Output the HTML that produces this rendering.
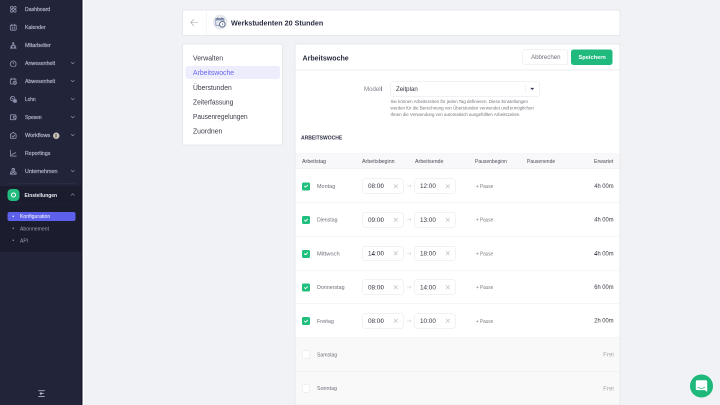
<!DOCTYPE html>
<html><head><meta charset="utf-8">
<style>
*{box-sizing:border-box;margin:0;padding:0}
html,body{width:720px;height:405px;overflow:hidden;background:#f1f2f6}
body{font-family:"Liberation Sans",sans-serif}
#root{will-change:transform;position:absolute;left:0;top:0;width:1440px;height:810px;transform:scale(0.5);transform-origin:0 0;background:#f1f2f6;overflow:hidden}
.a{position:absolute}
.t{position:absolute;white-space:nowrap}
.card{position:absolute;background:#fff;border:2px solid #e7e8ec;border-radius:4px}
.ol{position:absolute;border:2px solid #e7e8ec;border-radius:4px}
#sb{position:absolute;left:0;top:0;width:162px;height:810px;background:#222539;overflow:hidden}
</style></head><body>
<div id="root">
<div id="sb">
<svg class="a" style="left:19px;top:10.5px" width="15" height="15" viewBox="0 0 15 15" fill="none" stroke="#8f92ad" stroke-width="1.7" stroke-linejoin="round" stroke-linecap="round"><rect x="1.8" y="1.8" width="5" height="5" rx="2.3"/><rect x="8.2" y="1.8" width="5" height="5" rx="2.3"/><rect x="1.8" y="8.2" width="5" height="5" rx="2.3"/><rect x="8.2" y="8.2" width="5" height="5" rx="2.3"/></svg>
<div class="t" style="left:49.60px;top:11.57px;font-size:10.6px;line-height:12.72px;color:#aeb0c5;transform:scaleX(0.97);transform-origin:left center;-webkit-text-stroke:0.4px #aeb0c5;">Dashboard</div>
<svg class="a" style="left:19px;top:46.5px" width="15" height="15" viewBox="0 0 15 15" fill="none" stroke="#8f92ad" stroke-width="1.7" stroke-linejoin="round" stroke-linecap="round"><rect x="1.6" y="3.4" width="11.8" height="10" rx="1.6"/><path d="M4.6 1.4v3.4M10.4 1.4v3.4M5.6 7v4M9.4 7v4"/></svg>
<div class="t" style="left:49.60px;top:47.57px;font-size:10.6px;line-height:12.72px;color:#aeb0c5;transform:scaleX(0.97);transform-origin:left center;-webkit-text-stroke:0.4px #aeb0c5;">Kalender</div>
<svg class="a" style="left:19px;top:82.5px" width="15" height="15" viewBox="0 0 15 15" fill="none" stroke="#8f92ad" stroke-width="1.7" stroke-linejoin="round" stroke-linecap="round"><g fill="#8f92ad" stroke="none"><circle cx="7.5" cy="3.4" r="2.1"/><path d="M4.5 8.6a3 3 0 0 1 6 0z"/><circle cx="4.1" cy="9.2" r="1.8"/><path d="M1 14.2a3.1 3.1 0 0 1 6.2 0z"/><circle cx="10.9" cy="9.2" r="1.8"/><path d="M7.8 14.2a3.1 3.1 0 0 1 6.2 0z"/></g></svg>
<div class="t" style="left:49.60px;top:83.57px;font-size:10.6px;line-height:12.72px;color:#aeb0c5;transform:scaleX(1.03);transform-origin:left center;-webkit-text-stroke:0.4px #aeb0c5;">Mitarbeiter</div>
<svg class="a" style="left:19px;top:118.5px" width="15" height="15" viewBox="0 0 15 15" fill="none" stroke="#8f92ad" stroke-width="1.7" stroke-linejoin="round" stroke-linecap="round"><path d="M7.5 2.6l1.4 1 1.7-.2.7 1.6 1.5.9-.2 1.7 1 1.4-1 1.4.2 1.7-1.5.9-.7 1.6-1.7-.2-1.4 1-1.4-1-1.7.2-.7-1.6-1.5-.9.2-1.7-1-1.4 1-1.4-.2-1.7 1.5-.9.7-1.6 1.7.2z" stroke-width="1.5"/><path d="M7.5 6v2.6"/></svg>
<div class="t" style="left:49.60px;top:119.57px;font-size:10.6px;line-height:12.72px;color:#aeb0c5;transform:scaleX(0.99);transform-origin:left center;-webkit-text-stroke:0.4px #aeb0c5;">Anwesenheit</div>
<svg class="a" style="left:141px;top:122.5px" width="9" height="6" viewBox="0 0 9 6" fill="none" stroke="#8c8fa9" stroke-width="1.3" stroke-linecap="round"><path d="M1.2 1.4l3.3 3.1 3.3-3.1"/></svg>
<svg class="a" style="left:19px;top:154.5px" width="15" height="15" viewBox="0 0 15 15" fill="none" stroke="#8f92ad" stroke-width="1.7" stroke-linejoin="round" stroke-linecap="round"><path d="M6 13H3a1.3 1.3 0 0 1-1.3-1.3V4.3A1.3 1.3 0 0 1 3 3h8.6a1.3 1.3 0 0 1 1.3 1.3V6M4.6 1.2v3.2M9.6 1.2v3.2"/><circle cx="10.6" cy="10.6" r="3.3"/><path d="M10.6 9.1v1.6l1.1.8"/></svg>
<div class="t" style="left:49.60px;top:155.57px;font-size:10.6px;line-height:12.72px;color:#aeb0c5;transform:scaleX(0.99);transform-origin:left center;-webkit-text-stroke:0.4px #aeb0c5;">Abwesenheit</div>
<svg class="a" style="left:141px;top:158.5px" width="9" height="6" viewBox="0 0 9 6" fill="none" stroke="#8c8fa9" stroke-width="1.3" stroke-linecap="round"><path d="M1.2 1.4l3.3 3.1 3.3-3.1"/></svg>
<svg class="a" style="left:19px;top:190.5px" width="15" height="15" viewBox="0 0 15 15" fill="none" stroke="#8f92ad" stroke-width="1.7" stroke-linejoin="round" stroke-linecap="round"><circle cx="6.2" cy="6.2" r="4.5"/><path d="M4.5 4.5l3.4 3.4"/><rect x="8.4" y="8.6" width="5.4" height="5" rx="0.8" fill="#8f92ad"/></svg>
<div class="t" style="left:49.60px;top:191.57px;font-size:10.6px;line-height:12.72px;color:#aeb0c5;transform:scaleX(0.9);transform-origin:left center;-webkit-text-stroke:0.4px #aeb0c5;">Lohn</div>
<svg class="a" style="left:141px;top:194.5px" width="9" height="6" viewBox="0 0 9 6" fill="none" stroke="#8c8fa9" stroke-width="1.3" stroke-linecap="round"><path d="M1.2 1.4l3.3 3.1 3.3-3.1"/></svg>
<svg class="a" style="left:19px;top:226.5px" width="15" height="15" viewBox="0 0 15 15" fill="none" stroke="#8f92ad" stroke-width="1.7" stroke-linejoin="round" stroke-linecap="round"><path d="M12.6 5V3.6a1 1 0 0 0-1-1H2.8a1 1 0 0 0-1 1v7.8a1 1 0 0 0 1 1h8.8a1 1 0 0 0 1-1V10"/><path d="M13.4 5.6H9.2a1.9 1.9 0 0 0 0 3.8h4.2z"/></svg>
<div class="t" style="left:49.60px;top:227.57px;font-size:10.6px;line-height:12.72px;color:#aeb0c5;transform:scaleX(0.92);transform-origin:left center;-webkit-text-stroke:0.4px #aeb0c5;">Spesen</div>
<svg class="a" style="left:141px;top:230.5px" width="9" height="6" viewBox="0 0 9 6" fill="none" stroke="#8c8fa9" stroke-width="1.3" stroke-linecap="round"><path d="M1.2 1.4l3.3 3.1 3.3-3.1"/></svg>
<svg class="a" style="left:19px;top:262.5px" width="15" height="15" viewBox="0 0 15 15" fill="none" stroke="#8f92ad" stroke-width="1.7" stroke-linejoin="round" stroke-linecap="round"><path d="M1.8 5.8l5.7-4.2 5.7 4.2v6.6a1.2 1.2 0 0 1-1.2 1.2H3a1.2 1.2 0 0 1-1.2-1.2z"/><path d="M4.8 8.8l2.2 2.2 3.2-3.6"/></svg>
<div class="t" style="left:49.60px;top:263.57px;font-size:10.6px;line-height:12.72px;color:#aeb0c5;transform:scaleX(1.04);transform-origin:left center;-webkit-text-stroke:0.4px #aeb0c5;">Workflows</div>
<svg class="a" style="left:141px;top:266.5px" width="9" height="6" viewBox="0 0 9 6" fill="none" stroke="#8c8fa9" stroke-width="1.3" stroke-linecap="round"><path d="M1.2 1.4l3.3 3.1 3.3-3.1"/></svg>
<svg class="a" style="left:19px;top:298.5px" width="15" height="15" viewBox="0 0 15 15" fill="none" stroke="#8f92ad" stroke-width="1.7" stroke-linejoin="round" stroke-linecap="round"><path d="M2 1.6v11.6h11.4"/><path d="M4.4 10.6c2-3 3-1 5.2-2.6l2.6-2.2"/></svg>
<div class="t" style="left:49.60px;top:299.57px;font-size:10.6px;line-height:12.72px;color:#aeb0c5;transform:scaleX(0.99);transform-origin:left center;-webkit-text-stroke:0.4px #aeb0c5;">Reportings</div>
<svg class="a" style="left:19px;top:334.5px" width="15" height="15" viewBox="0 0 15 15" fill="none" stroke="#8f92ad" stroke-width="1.7" stroke-linejoin="round" stroke-linecap="round"><path d="M7.5 1.6c-1.6 0-2.6 1.2-2.6 2.6v3.6l-2.6 1.8a1.3 1.3 0 0 0-.6 1.1v2.6h11.6v-2.6a1.3 1.3 0 0 0-.6-1.1l-2.6-1.8V4.2c0-1.4-1-2.6-2.6-2.6z"/><path d="M7.5 3v6.5M7.5 9.5L4 11.8M7.5 9.5l3.5 2.3"/></svg>
<div class="t" style="left:49.60px;top:335.57px;font-size:10.6px;line-height:12.72px;color:#aeb0c5;transform:scaleX(1.01);transform-origin:left center;-webkit-text-stroke:0.4px #aeb0c5;">Unternehmen</div>
<svg class="a" style="left:141px;top:338.5px" width="9" height="6" viewBox="0 0 9 6" fill="none" stroke="#8c8fa9" stroke-width="1.3" stroke-linecap="round"><path d="M1.2 1.4l3.3 3.1 3.3-3.1"/></svg>
<div class="a" style="left:105.5px;top:264.5px;width:13px;height:13px;border-radius:50%;background:#c7c2b8"></div>
<div class="a" style="left:111px;top:267.5px;width:2px;height:7px;background:#4a4a55"></div>
<div class="a" style="left:18px;top:366.5px;width:132px;height:0;border-top:1px dashed #3a3d55"></div>
<div class="a" style="left:0;top:372px;width:162px;height:132px;background:#1b1c2d"></div>
<div class="a" style="left:18px;top:407.5px;width:132px;height:0;border-top:1px dotted #2c2e42"></div>
<div class="a" style="left:15px;top:378px;width:24px;height:24px;border-radius:8px;background:#22bb7d"></div>
<div class="a" style="left:22px;top:385px;width:10px;height:10px;border-radius:50%;border:2.6px solid #fff"></div>
<div class="t" style="left:49.40px;top:383.58px;font-size:10.8px;line-height:12.96px;color:#eceef5;font-weight:bold;transform:scaleX(0.92);transform-origin:left center;">Einstellungen</div>
<svg class="a" style="left:141px;top:386px" width="9" height="6" viewBox="0 0 9 6" fill="none" stroke="#8c8fa9" stroke-width="1.3" stroke-linecap="round"><path d="M1.2 4.6l3.3-3.1 3.3 3.1"/></svg>
<div class="a" style="left:15px;top:424px;width:135.5px;height:18px;border-radius:4px;background:#5d60ea"></div>
<div class="a" style="left:25.3px;top:431.2px;width:3px;height:3px;border-radius:50%;background:#ffffff"></div>
<div class="t" style="left:39.60px;top:426.38px;font-size:10.9px;line-height:13.08px;color:#ffffff;transform:scaleX(0.94);transform-origin:left center;">Konfiguration</div>
<div class="a" style="left:25.3px;top:455.40000000000003px;width:3px;height:3px;border-radius:50%;background:#8f91a6"></div>
<div class="t" style="left:39.60px;top:450.58px;font-size:10.9px;line-height:13.08px;color:#9c9eb3;transform:scaleX(0.94);transform-origin:left center;">Abonnement</div>
<div class="a" style="left:25.3px;top:479.40000000000003px;width:3px;height:3px;border-radius:50%;background:#8f91a6"></div>
<div class="t" style="left:39.60px;top:474.58px;font-size:10.9px;line-height:13.08px;color:#9c9eb3;transform:scaleX(0.94);transform-origin:left center;">API</div>
<svg class="a" style="left:75px;top:778.5px" width="16" height="16" viewBox="0 0 16 16" fill="none" stroke="#aeb0c6" stroke-width="1.7"><path d="M1.5 2.4h13M1.5 13.8h13M12.5 8.1H5.5"/><path d="M4.2 8.1l3.4-2.8v5.6z" fill="#c9cbdc" stroke-width="1"/></svg>
</div>
<div class="a" style="left:162px;top:0;width:3px;height:810px;background:#15162a"></div>
<div class="a" style="left:165px;top:0;width:3px;height:810px;background:#fff"></div>
<div class="card" style="left:364px;top:18.5px;width:877px;height:53px"></div>
<div class="a" style="left:412.5px;top:20px;width:1.2px;height:50px;background:#ececf0"></div>
<svg class="a" style="left:380px;top:36.5px" width="17" height="16" viewBox="0 0 17 16" fill="none" stroke="#a4a5ae" stroke-width="1.2"><path d="M16 8H1.5M8 1.5L1.5 8 8 14.5"/></svg>
<div class="a" style="left:425.5px;top:29.2px;width:29.6px;height:29.6px;border-radius:50%;background:#e9eaee"></div>
<svg class="a" style="left:425px;top:29px" width="30" height="30" viewBox="0 0 30 30"><rect x="6.4" y="8.2" width="16.4" height="13.6" rx="1.5" fill="none" stroke="#9aa8c8" stroke-width="2.2"/><rect x="6.4" y="7.6" width="16.4" height="4.2" fill="#7e8bab"/><rect x="9.5" y="6" width="2" height="3" fill="#5d6a8a"/><rect x="17.5" y="6" width="2" height="3" fill="#5d6a8a"/><circle cx="19.6" cy="19.6" r="5.6" fill="#fff" stroke="#5f6d8f" stroke-width="2"/><path d="M19.6 17.2v2.6l1.6 1" fill="none" stroke="#5f6d8f" stroke-width="1.4"/></svg>
<div class="t" style="left:462.00px;top:36.93px;font-size:15.5px;line-height:18.6px;color:#2a2c43;font-weight:bold;transform:scaleX(0.925);transform-origin:left center;">Werkstudenten 20 Stunden</div>
<div class="card" style="left:364px;top:86.8px;width:202px;height:204px"></div>
<div class="a" style="left:370.5px;top:132px;width:189.5px;height:25.5px;border-radius:5px;background:#ededfd"></div>
<div class="t" style="left:385.60px;top:108.16px;font-size:14.2px;line-height:17.04px;color:#3b3b48;transform:scaleX(0.965);transform-origin:left center;">Verwalten</div>
<div class="t" style="left:385.60px;top:137.36px;font-size:14.2px;line-height:17.04px;color:#6567ef;transform:scaleX(0.965);transform-origin:left center;">Arbeitswoche</div>
<div class="t" style="left:385.60px;top:166.56px;font-size:14.2px;line-height:17.04px;color:#3b3b48;transform:scaleX(0.953);transform-origin:left center;">Überstunden</div>
<div class="t" style="left:385.60px;top:195.76px;font-size:14.2px;line-height:17.04px;color:#3b3b48;transform:scaleX(0.938);transform-origin:left center;">Zeiterfassung</div>
<div class="t" style="left:385.60px;top:224.96px;font-size:14.2px;line-height:17.04px;color:#3b3b48;transform:scaleX(0.917);transform-origin:left center;">Pausenregelungen</div>
<div class="t" style="left:385.60px;top:254.16px;font-size:14.2px;line-height:17.04px;color:#3b3b48;transform:scaleX(0.965);transform-origin:left center;">Zuordnen</div>
<div class="card" style="left:589px;top:87px;width:652px;height:760px"></div>
<div class="a" style="left:591px;top:139px;width:649px;height:1.5px;background:#ededf1"></div>
<div class="t" style="left:604.80px;top:106.60px;font-size:15px;line-height:18.0px;color:#2a2c40;font-weight:bold;transform:scaleX(0.94);transform-origin:left center;">Arbeitswoche</div>
<div class="a" style="left:1044.5px;top:98.5px;width:91px;height:31px;border:1.3px solid #e3e4e9;border-radius:5px;background:#fff"></div>
<div class="t" style="left:1062.20px;top:106.67px;font-size:12.6px;line-height:15.12px;color:#6f6f7a;transform:scaleX(0.97);transform-origin:left center;">Abbrechen</div>
<div class="a" style="left:1142px;top:98.5px;width:83px;height:31px;border-radius:5px;background:#21ba7e"></div>
<div class="t" style="left:1157.00px;top:107.43px;font-size:11.8px;line-height:14.16px;color:#ffffff;font-weight:bold;transform:scaleX(0.96);transform-origin:left center;">Speichern</div>
<div class="t" style="left:728.40px;top:169.50px;font-size:13px;line-height:15.6px;color:#83838c;transform:scaleX(0.94);transform-origin:left center;">Modell</div>
<div class="a" style="left:780.5px;top:162.5px;width:299px;height:30.5px;border:1.3px solid #e3e4e9;border-radius:5px;background:#fff"></div>
<div class="t" style="left:792.40px;top:170.30px;font-size:13px;line-height:15.6px;color:#33333f;transform:scaleX(0.94);transform-origin:left center;">Zeitplan</div>
<div class="a" style="left:1049.5px;top:170px;width:1.3px;height:15px;background:#e6e7ec"></div>
<svg class="a" style="left:1059.5px;top:174.5px" width="9" height="6" viewBox="0 0 9 6"><path d="M0.5 0.8h8L4.5 5z" fill="#2d3047"/></svg>
<div class="t" style="left:780.50px;top:197.80px;font-size:9.3px;line-height:11.16px;color:#76767f;transform:scaleX(0.95);transform-origin:left center;">Sie können Arbeitszeiten für jeden Tag definieren. Diese Einstellungen</div>
<div class="t" style="left:780.50px;top:210.90px;font-size:9.3px;line-height:11.16px;color:#76767f;transform:scaleX(0.95);transform-origin:left center;">werden für die Berechnung von Überstunden verwendet und ermöglichen</div>
<div class="t" style="left:780.50px;top:224.00px;font-size:9.3px;line-height:11.16px;color:#76767f;transform:scaleX(0.95);transform-origin:left center;">Ihnen die Verwendung von automatisch ausgefüllten Arbeitszeiten.</div>
<div class="t" style="left:601.60px;top:267.63px;font-size:11.8px;line-height:14.16px;color:#2e3046;font-weight:bold;transform:scaleX(0.85);transform-origin:left center;">ARBEITSWOCHE</div>
<div class="a" style="left:591px;top:307.3px;width:649px;height:30.7px;background:#f8f8fa;border-top:1.2px solid #ececf0;border-bottom:1.2px solid #ececf0"></div>
<div class="t" style="left:604.40px;top:316.48px;font-size:10.9px;line-height:13.08px;color:#4b4b57;transform:scaleX(0.98);transform-origin:left center;">Arbeitstag</div>
<div class="t" style="left:724.40px;top:316.48px;font-size:10.9px;line-height:13.08px;color:#4b4b57;transform:scaleX(0.98);transform-origin:left center;">Arbeitsbeginn</div>
<div class="t" style="left:830.00px;top:316.48px;font-size:10.9px;line-height:13.08px;color:#4b4b57;transform:scaleX(0.98);transform-origin:left center;">Arbeitsende</div>
<div class="t" style="left:950.00px;top:316.48px;font-size:10.9px;line-height:13.08px;color:#4b4b57;transform:scaleX(0.915);transform-origin:left center;">Pausenbeginn</div>
<div class="t" style="left:1054.20px;top:316.48px;font-size:10.9px;line-height:13.08px;color:#4b4b57;transform:scaleX(0.92);transform-origin:left center;">Pausenende</div>
<div class="t" style="right:213.40px;top:316.48px;font-size:10.9px;line-height:13.08px;color:#4b4b57;transform:scaleX(0.95);transform-origin:right center;">Erwartet</div>
<div class="a" style="left:591px;top:338.30px;width:649px;height:67.45px;background:#fff;border-bottom:1.2px solid #ececf0"></div>
<div class="a" style="left:603.8px;top:364.60px;width:16.2px;height:16px;border-radius:3px;background:#20bf7e"></div>
<svg class="a" style="left:606.8px;top:367.20px" width="10" height="10" viewBox="0 0 10 10" fill="none" stroke="#fff" stroke-width="1.8" stroke-linecap="round" stroke-linejoin="round"><path d="M2 5.3l2.1 2 4-4"/></svg>
<div class="t" style="left:633.60px;top:365.71px;font-size:11.4px;line-height:13.68px;color:#6d6d78;transform:scaleX(0.96);transform-origin:left center;">Montag</div>
<div class="a" style="left:724.6px;top:356.70px;width:82.6px;height:30.6px;border:1.3px solid #e4e5ea;border-radius:5px;background:#fff"></div>
<div class="t" style="left:736.40px;top:364.21px;font-size:13.2px;line-height:15.84px;color:#3a3a46;transform:scaleX(0.96);transform-origin:left center;">08:00</div>
<svg class="a" style="left:787.4px;top:367.50px" width="9" height="9" viewBox="0 0 9 9" fill="none" stroke="#b4b4bc" stroke-width="1.2"><path d="M0.6 0.6l7.8 7.8M8.4 0.6l-7.8 7.8"/></svg>
<div class="a" style="left:828.6px;top:356.70px;width:82.6px;height:30.6px;border:1.3px solid #e4e5ea;border-radius:5px;background:#fff"></div>
<div class="t" style="left:840.40px;top:364.21px;font-size:13.2px;line-height:15.84px;color:#3a3a46;transform:scaleX(0.96);transform-origin:left center;">12:00</div>
<svg class="a" style="left:891.4px;top:367.50px" width="9" height="9" viewBox="0 0 9 9" fill="none" stroke="#b4b4bc" stroke-width="1.2"><path d="M0.6 0.6l7.8 7.8M8.4 0.6l-7.8 7.8"/></svg>
<svg class="a" style="left:812.6px;top:369.00px" width="10" height="6" viewBox="0 0 10 6" fill="none" stroke="#c8c8cf" stroke-width="1"><path d="M1 3h8M6.5 0.8L9 3 6.5 5.2"/></svg>
<div class="t" style="left:951.60px;top:365.98px;font-size:10.8px;line-height:12.96px;color:#7a7a83;transform:scaleX(0.86);transform-origin:left center;">+ Pause</div>
<div class="t" style="right:212.80px;top:364.66px;font-size:12.3px;line-height:14.76px;color:#3a3a46;transform:scaleX(0.94);transform-origin:right center;">4h 00m</div>
<div class="a" style="left:591px;top:405.75px;width:649px;height:67.45px;background:#fff;border-bottom:1.2px solid #ececf0"></div>
<div class="a" style="left:603.8px;top:432.05px;width:16.2px;height:16px;border-radius:3px;background:#20bf7e"></div>
<svg class="a" style="left:606.8px;top:434.65px" width="10" height="10" viewBox="0 0 10 10" fill="none" stroke="#fff" stroke-width="1.8" stroke-linecap="round" stroke-linejoin="round"><path d="M2 5.3l2.1 2 4-4"/></svg>
<div class="t" style="left:633.60px;top:433.16px;font-size:11.4px;line-height:13.68px;color:#6d6d78;transform:scaleX(0.91);transform-origin:left center;">Dienstag</div>
<div class="a" style="left:724.6px;top:424.15px;width:82.6px;height:30.6px;border:1.3px solid #e4e5ea;border-radius:5px;background:#fff"></div>
<div class="t" style="left:736.40px;top:431.66px;font-size:13.2px;line-height:15.84px;color:#3a3a46;transform:scaleX(0.96);transform-origin:left center;">09:00</div>
<svg class="a" style="left:787.4px;top:434.95px" width="9" height="9" viewBox="0 0 9 9" fill="none" stroke="#b4b4bc" stroke-width="1.2"><path d="M0.6 0.6l7.8 7.8M8.4 0.6l-7.8 7.8"/></svg>
<div class="a" style="left:828.6px;top:424.15px;width:82.6px;height:30.6px;border:1.3px solid #e4e5ea;border-radius:5px;background:#fff"></div>
<div class="t" style="left:840.40px;top:431.66px;font-size:13.2px;line-height:15.84px;color:#3a3a46;transform:scaleX(0.96);transform-origin:left center;">13:00</div>
<svg class="a" style="left:891.4px;top:434.95px" width="9" height="9" viewBox="0 0 9 9" fill="none" stroke="#b4b4bc" stroke-width="1.2"><path d="M0.6 0.6l7.8 7.8M8.4 0.6l-7.8 7.8"/></svg>
<svg class="a" style="left:812.6px;top:436.45px" width="10" height="6" viewBox="0 0 10 6" fill="none" stroke="#c8c8cf" stroke-width="1"><path d="M1 3h8M6.5 0.8L9 3 6.5 5.2"/></svg>
<div class="t" style="left:951.60px;top:433.43px;font-size:10.8px;line-height:12.96px;color:#7a7a83;transform:scaleX(0.86);transform-origin:left center;">+ Pause</div>
<div class="t" style="right:212.80px;top:432.11px;font-size:12.3px;line-height:14.76px;color:#3a3a46;transform:scaleX(0.94);transform-origin:right center;">4h 00m</div>
<div class="a" style="left:591px;top:473.20px;width:649px;height:67.45px;background:#fff;border-bottom:1.2px solid #ececf0"></div>
<div class="a" style="left:603.8px;top:499.50px;width:16.2px;height:16px;border-radius:3px;background:#20bf7e"></div>
<svg class="a" style="left:606.8px;top:502.10px" width="10" height="10" viewBox="0 0 10 10" fill="none" stroke="#fff" stroke-width="1.8" stroke-linecap="round" stroke-linejoin="round"><path d="M2 5.3l2.1 2 4-4"/></svg>
<div class="t" style="left:633.60px;top:500.61px;font-size:11.4px;line-height:13.68px;color:#6d6d78;transform:scaleX(1.01);transform-origin:left center;">Mittwoch</div>
<div class="a" style="left:724.6px;top:491.60px;width:82.6px;height:30.6px;border:1.3px solid #e4e5ea;border-radius:5px;background:#fff"></div>
<div class="t" style="left:736.40px;top:499.11px;font-size:13.2px;line-height:15.84px;color:#3a3a46;transform:scaleX(0.96);transform-origin:left center;">14:00</div>
<svg class="a" style="left:787.4px;top:502.40px" width="9" height="9" viewBox="0 0 9 9" fill="none" stroke="#b4b4bc" stroke-width="1.2"><path d="M0.6 0.6l7.8 7.8M8.4 0.6l-7.8 7.8"/></svg>
<div class="a" style="left:828.6px;top:491.60px;width:82.6px;height:30.6px;border:1.3px solid #e4e5ea;border-radius:5px;background:#fff"></div>
<div class="t" style="left:840.40px;top:499.11px;font-size:13.2px;line-height:15.84px;color:#3a3a46;transform:scaleX(0.96);transform-origin:left center;">18:00</div>
<svg class="a" style="left:891.4px;top:502.40px" width="9" height="9" viewBox="0 0 9 9" fill="none" stroke="#b4b4bc" stroke-width="1.2"><path d="M0.6 0.6l7.8 7.8M8.4 0.6l-7.8 7.8"/></svg>
<svg class="a" style="left:812.6px;top:503.90px" width="10" height="6" viewBox="0 0 10 6" fill="none" stroke="#c8c8cf" stroke-width="1"><path d="M1 3h8M6.5 0.8L9 3 6.5 5.2"/></svg>
<div class="t" style="left:951.60px;top:500.88px;font-size:10.8px;line-height:12.96px;color:#7a7a83;transform:scaleX(0.86);transform-origin:left center;">+ Pause</div>
<div class="t" style="right:212.80px;top:499.56px;font-size:12.3px;line-height:14.76px;color:#3a3a46;transform:scaleX(0.94);transform-origin:right center;">4h 00m</div>
<div class="a" style="left:591px;top:540.65px;width:649px;height:67.45px;background:#fff;border-bottom:1.2px solid #ececf0"></div>
<div class="a" style="left:603.8px;top:566.95px;width:16.2px;height:16px;border-radius:3px;background:#20bf7e"></div>
<svg class="a" style="left:606.8px;top:569.55px" width="10" height="10" viewBox="0 0 10 10" fill="none" stroke="#fff" stroke-width="1.8" stroke-linecap="round" stroke-linejoin="round"><path d="M2 5.3l2.1 2 4-4"/></svg>
<div class="t" style="left:633.60px;top:568.06px;font-size:11.4px;line-height:13.68px;color:#6d6d78;transform:scaleX(0.935);transform-origin:left center;">Donnerstag</div>
<div class="a" style="left:724.6px;top:559.05px;width:82.6px;height:30.6px;border:1.3px solid #e4e5ea;border-radius:5px;background:#fff"></div>
<div class="t" style="left:736.40px;top:566.56px;font-size:13.2px;line-height:15.84px;color:#3a3a46;transform:scaleX(0.96);transform-origin:left center;">08:00</div>
<svg class="a" style="left:787.4px;top:569.85px" width="9" height="9" viewBox="0 0 9 9" fill="none" stroke="#b4b4bc" stroke-width="1.2"><path d="M0.6 0.6l7.8 7.8M8.4 0.6l-7.8 7.8"/></svg>
<div class="a" style="left:828.6px;top:559.05px;width:82.6px;height:30.6px;border:1.3px solid #e4e5ea;border-radius:5px;background:#fff"></div>
<div class="t" style="left:840.40px;top:566.56px;font-size:13.2px;line-height:15.84px;color:#3a3a46;transform:scaleX(0.96);transform-origin:left center;">14:00</div>
<svg class="a" style="left:891.4px;top:569.85px" width="9" height="9" viewBox="0 0 9 9" fill="none" stroke="#b4b4bc" stroke-width="1.2"><path d="M0.6 0.6l7.8 7.8M8.4 0.6l-7.8 7.8"/></svg>
<svg class="a" style="left:812.6px;top:571.35px" width="10" height="6" viewBox="0 0 10 6" fill="none" stroke="#c8c8cf" stroke-width="1"><path d="M1 3h8M6.5 0.8L9 3 6.5 5.2"/></svg>
<div class="t" style="left:951.60px;top:568.33px;font-size:10.8px;line-height:12.96px;color:#7a7a83;transform:scaleX(0.86);transform-origin:left center;">+ Pause</div>
<div class="t" style="right:212.80px;top:567.01px;font-size:12.3px;line-height:14.76px;color:#3a3a46;transform:scaleX(0.94);transform-origin:right center;">6h 00m</div>
<div class="a" style="left:591px;top:608.10px;width:649px;height:67.45px;background:#fff;border-bottom:1.2px solid #ececf0"></div>
<div class="a" style="left:603.8px;top:634.40px;width:16.2px;height:16px;border-radius:3px;background:#20bf7e"></div>
<svg class="a" style="left:606.8px;top:637.00px" width="10" height="10" viewBox="0 0 10 10" fill="none" stroke="#fff" stroke-width="1.8" stroke-linecap="round" stroke-linejoin="round"><path d="M2 5.3l2.1 2 4-4"/></svg>
<div class="t" style="left:633.60px;top:635.51px;font-size:11.4px;line-height:13.68px;color:#6d6d78;transform:scaleX(0.95);transform-origin:left center;">Freitag</div>
<div class="a" style="left:724.6px;top:626.50px;width:82.6px;height:30.6px;border:1.3px solid #e4e5ea;border-radius:5px;background:#fff"></div>
<div class="t" style="left:736.40px;top:634.01px;font-size:13.2px;line-height:15.84px;color:#3a3a46;transform:scaleX(0.96);transform-origin:left center;">08:00</div>
<svg class="a" style="left:787.4px;top:637.30px" width="9" height="9" viewBox="0 0 9 9" fill="none" stroke="#b4b4bc" stroke-width="1.2"><path d="M0.6 0.6l7.8 7.8M8.4 0.6l-7.8 7.8"/></svg>
<div class="a" style="left:828.6px;top:626.50px;width:82.6px;height:30.6px;border:1.3px solid #e4e5ea;border-radius:5px;background:#fff"></div>
<div class="t" style="left:840.40px;top:634.01px;font-size:13.2px;line-height:15.84px;color:#3a3a46;transform:scaleX(0.96);transform-origin:left center;">10:00</div>
<svg class="a" style="left:891.4px;top:637.30px" width="9" height="9" viewBox="0 0 9 9" fill="none" stroke="#b4b4bc" stroke-width="1.2"><path d="M0.6 0.6l7.8 7.8M8.4 0.6l-7.8 7.8"/></svg>
<svg class="a" style="left:812.6px;top:638.80px" width="10" height="6" viewBox="0 0 10 6" fill="none" stroke="#c8c8cf" stroke-width="1"><path d="M1 3h8M6.5 0.8L9 3 6.5 5.2"/></svg>
<div class="t" style="left:951.60px;top:635.78px;font-size:10.8px;line-height:12.96px;color:#7a7a83;transform:scaleX(0.86);transform-origin:left center;">+ Pause</div>
<div class="t" style="right:212.80px;top:634.46px;font-size:12.3px;line-height:14.76px;color:#3a3a46;transform:scaleX(0.94);transform-origin:right center;">2h 00m</div>
<div class="a" style="left:591px;top:675.55px;width:649px;height:67.45px;background:#f9f9fa;border-bottom:1.2px solid #ececf0"></div>
<div class="a" style="left:603.8px;top:701.25px;width:16.2px;height:16px;border-radius:3px;background:#fff;border:1px solid #e3e4e8"></div>
<div class="t" style="left:633.60px;top:702.96px;font-size:11.4px;line-height:13.68px;color:#6d6d78;transform:scaleX(0.9);transform-origin:left center;">Samstag</div>
<div class="t" style="right:212.40px;top:701.05px;font-size:13px;line-height:15.6px;color:#a6a6ae;transform:scaleX(0.94);transform-origin:right center;">Frei</div>
<div class="a" style="left:591px;top:743.00px;width:649px;height:67.45px;background:#f9f9fa;border-bottom:1.2px solid #ececf0"></div>
<div class="a" style="left:603.8px;top:768.70px;width:16.2px;height:16px;border-radius:3px;background:#fff;border:1px solid #e3e4e8"></div>
<div class="t" style="left:633.60px;top:770.41px;font-size:11.4px;line-height:13.68px;color:#6d6d78;transform:scaleX(0.94);transform-origin:left center;">Sonntag</div>
<div class="t" style="right:212.40px;top:768.50px;font-size:13px;line-height:15.6px;color:#a6a6ae;transform:scaleX(0.94);transform-origin:right center;">Frei</div>
<div class="ol" style="left:589px;top:87px;width:652px;height:760px"></div>
<div class="a" style="left:1380px;top:749px;width:45.5px;height:45.5px;border-radius:50%;background:#1db87a"></div>
<svg class="a" style="left:1390px;top:759px" width="26" height="26" viewBox="0 0 26 26"><path d="M4.6 1.6h16.8a3 3 0 0 1 3 3v20.2l-5-3.6H4.6a3 3 0 0 1-3-3V4.6a3 3 0 0 1 3-3z" fill="#fff"/><path d="M5.8 15.6c4 2.6 9.6 2.6 13.6 0" fill="none" stroke="#1db87a" stroke-width="1.7" stroke-linecap="round"/></svg>
</div>
</body></html>
